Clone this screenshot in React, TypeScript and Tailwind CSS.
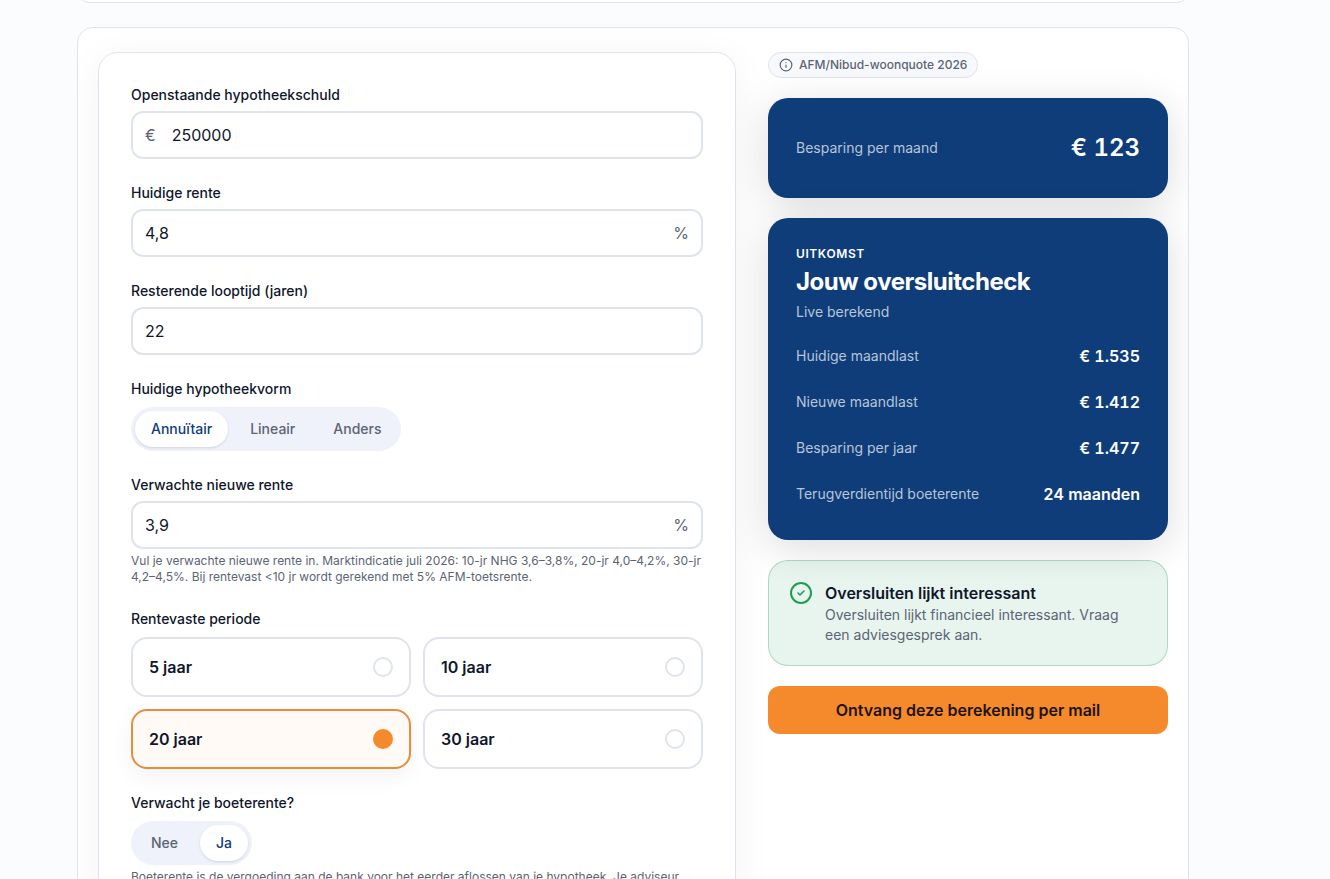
import { useState } from 'react';
import { Info } from 'lucide-react';
import { clsx } from 'clsx';

interface FieldProps {
  id: string;
  label: string;
  initial: string;
  prefix?: string;
  suffix?: string;
  hint?: string;
}

interface SegmentedProps {
  label: string;
  options: string[];
  initial: string;
  hint?: string;
}

const periods = ['5 jaar', '10 jaar', '20 jaar', '30 jaar'];

const results = [
  { label: 'Huidige maandlast', value: '€ 1.535' },
  { label: 'Nieuwe maandlast', value: '€ 1.412' },
  { label: 'Besparing per jaar', value: '€ 1.477' },
  { label: 'Terugverdientijd boeterente', value: '24 maanden' },
];

function Hint({ id, children }: { id?: string; children: string }) {
  return (
    <p id={id} className="mt-1 text-xs text-[#5b6475]">
      {children}
    </p>
  );
}

function Field({ id, label, initial, prefix, suffix, hint }: FieldProps) {
  const [value, setValue] = useState(initial);

  return (
    <div>
      <label htmlFor={id} className="block text-sm font-medium">
        {label}
      </label>
      <div className="mt-1.5 flex h-12 items-center rounded-xl border-2 border-[#dfe4ec] bg-white px-3 focus-within:border-[#0f3d7a]">
        {prefix && <span className="mr-4 text-[#5b6475]">{prefix}</span>}
        <input
          id={id}
          inputMode="decimal"
          value={value}
          onChange={(e) => setValue(e.target.value)}
          aria-describedby={hint ? `${id}-hint` : undefined}
          className="h-full min-w-0 flex-1 bg-transparent outline-none"
        />
        {suffix && <span className="ml-3 text-[#5b6475]">{suffix}</span>}
      </div>
      {hint && <Hint id={`${id}-hint`}>{hint}</Hint>}
    </div>
  );
}

function Segmented({ label, options, initial, hint }: SegmentedProps) {
  const [active, setActive] = useState(initial);

  return (
    <div role="group" aria-label={label}>
      <p className="text-sm font-medium">{label}</p>
      <div className="mt-2 flex w-fit gap-1.5 rounded-full bg-[#eff2fa] p-1">
        {options.map((option) => (
          <button
            key={option}
            type="button"
            aria-pressed={option === active}
            onClick={() => setActive(option)}
            className={clsx(
              'h-9 rounded-full px-4 text-sm font-medium',
              option === active ? 'bg-white text-[#0f3d7a] shadow-sm' : 'text-[#5b6475]'
            )}
          >
            {option}
          </button>
        ))}
      </div>
      {hint && <Hint>{hint}</Hint>}
    </div>
  );
}

function PeriodPicker() {
  const [period, setPeriod] = useState('20 jaar');

  return (
    <fieldset>
      <legend className="text-sm font-medium">Rentevaste periode</legend>
      <div className="mt-2 grid grid-cols-2 gap-3">
        {periods.map((option) => (
          <label
            key={option}
            className={clsx(
              'flex h-15 cursor-pointer items-center justify-between rounded-2xl border-2 px-4 font-semibold',
              option === period
                ? 'border-[#e88c3c] bg-[#fffaf6] shadow-[0_8px_24px_rgba(0,0,0,0.05)]'
                : 'border-[#dfe4ec] bg-white'
            )}
          >
            {option}
            <input
              type="radio"
              name="period"
              value={option}
              checked={option === period}
              onChange={() => setPeriod(option)}
              className="size-5 appearance-none rounded-full border-2 border-[#dfe4ec] bg-white checked:border-[#f58a2c] checked:bg-[#f58a2c]"
            />
          </label>
        ))}
      </div>
    </fieldset>
  );
}

function CalculatorForm() {
  return (
    <form className="flex flex-col gap-6 rounded-[20px] border border-[#dfe4ec] bg-white p-8 shadow-[0_8px_40px_rgba(0,0,0,0.05)]">
      <Field id="debt" label="Openstaande hypotheekschuld" initial="250000" prefix="€" />
      <Field id="current-rate" label="Huidige rente" initial="4,8" suffix="%" />
      <Field id="term" label="Resterende looptijd (jaren)" initial="22" />
      <Segmented
        label="Huidige hypotheekvorm"
        options={['Annuïtair', 'Lineair', 'Anders']}
        initial="Annuïtair"
      />
      <Field
        id="new-rate"
        label="Verwachte nieuwe rente"
        initial="3,9"
        suffix="%"
        hint="Vul je verwachte nieuwe rente in. Marktindicatie juli 2026: 10-jr NHG 3,6–3,8%, 20-jr 4,0–4,2%, 30-jr 4,2–4,5%. Bij rentevast <10 jr wordt gerekend met 5% AFM-toetsrente."
      />
      <PeriodPicker />
      <Segmented
        label="Verwacht je boeterente?"
        options={['Nee', 'Ja']}
        initial="Ja"
        hint="Boeterente is de vergoeding aan de bank voor het eerder aflossen van je hypotheek. Je adviseur"
      />
    </form>
  );
}

function CheckBadge() {
  return (
    <svg
      viewBox="0 0 24 24"
      fill="none"
      stroke="currentColor"
      strokeWidth="2"
      strokeLinecap="round"
      strokeLinejoin="round"
      aria-hidden="true"
      className="size-6 shrink-0 text-[#1f9d55]"
    >
      <circle cx="12" cy="12" r="10" />
      <path strokeWidth="1.6" d="m9 12 2 2 4-4" />
    </svg>
  );
}

function ResultPanel() {
  return (
    <aside className="flex flex-col items-stretch gap-5">
      <div className="flex items-center gap-1.5 self-start rounded-full border border-[#dfe4ec] bg-[#f7f9fd] px-2.5 py-1 text-xs font-medium text-[#5b6475]">
        <Info className="size-3.5" />
        AFM/Nibud-woonquote 2026
      </div>

      <div className="rounded-[20px] bg-[#0f3d7a] p-7 shadow-[0_8px_40px_rgba(0,0,0,0.14)]">
        <div className="flex items-center justify-between py-1.5">
          <span className="text-sm text-[#b7c5d7]">Besparing per maand</span>
          <span className="text-2xl font-semibold text-white tabular-nums">€ 123</span>
        </div>
      </div>

      <section className="rounded-[20px] bg-[#0f3d7a] p-7 shadow-[0_8px_40px_rgba(0,0,0,0.14)]">
        <p className="text-xs font-semibold tracking-wider text-white uppercase">Uitkomst</p>
        <h2 className="mt-1 text-2xl font-bold tracking-[-0.02em] text-white">Jouw oversluitcheck</h2>
        <p className="mt-1 text-sm text-[#b7c5d7]">Live berekend</p>
        <dl className="mt-4 flex flex-col gap-2.5">
          {results.map(({ label, value }) => (
            <div key={label} className="flex items-center justify-between py-1.5">
              <dt className="text-sm text-[#b7c5d7]">{label}</dt>
              <dd className="font-semibold text-white tabular-nums">{value}</dd>
            </div>
          ))}
        </dl>
      </section>

      <div className="flex gap-3 rounded-[20px] border border-[#1f9d55]/30 bg-[#1f9d55]/10 p-5">
        <CheckBadge />
        <div>
          <h3 className="font-semibold">Oversluiten lijkt interessant</h3>
          <p className="text-sm text-[#5b6475]">
            Oversluiten lijkt financieel interessant. Vraag een adviesgesprek aan.
          </p>
        </div>
      </div>

      <button type="button" className="h-12 rounded-xl bg-[#f58a2c] font-semibold text-[#1c1410]">
        Ontvang deze berekening per mail
      </button>
    </aside>
  );
}

export default function App() {
  return (
    <div className="h-screen overflow-hidden bg-[#fbfcfe] font-['Inter',sans-serif] text-[#0f172a]">
      <main className="mr-8 ml-[77px] max-w-[1112px]">
        <div className="h-[3px] overflow-hidden">
          <div className="-mt-12 h-[51px] rounded-xl border border-[#dfe4ec] bg-white" />
        </div>
        <div className="mt-6 overflow-hidden rounded-2xl border border-[#dfe4ec] bg-white px-5 py-6">
          <div className="grid grid-cols-[minmax(0,1fr)_400px] items-start gap-8">
            <CalculatorForm />
            <ResultPanel />
          </div>
        </div>
      </main>
    </div>
  );
}
